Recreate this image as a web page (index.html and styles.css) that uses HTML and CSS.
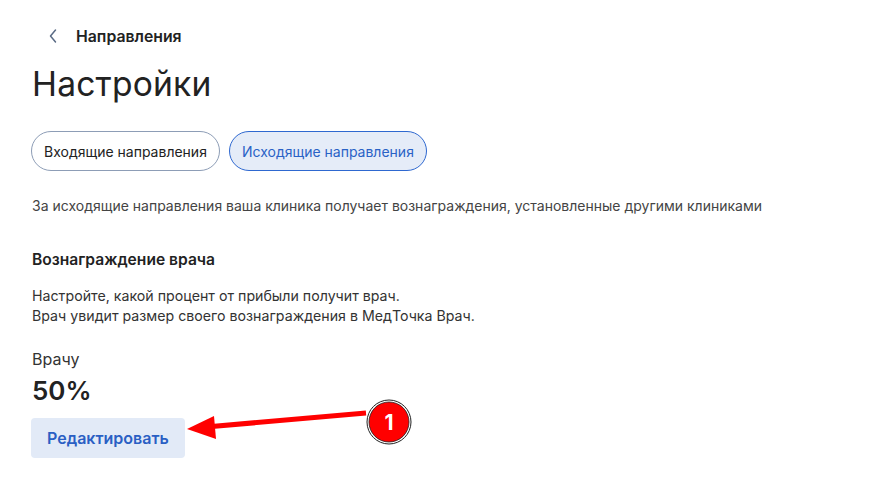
FILE: index.html
```html
<!DOCTYPE html>
<html lang="ru">
<head>
<meta charset="utf-8">
<link rel="stylesheet" href="styles.css">
</head>
<body>
<div class="page">
  <div class="back">
    <svg class="chev" width="10" height="16" viewBox="0 0 10 16"><path d="M7.5 2 L2.5 8 L7.5 14" fill="none" stroke="#5a6b85" stroke-width="1.5" stroke-linecap="round" stroke-linejoin="round"/></svg>
    <span>Направления</span>
  </div>
  <h1 class="title">Настройки</h1>
  <div class="tabs">
    <div class="tab">Входящие направления</div>
    <div class="tab active">Исходящие направления</div>
  </div>
  <p class="desc">За исходящие направления ваша клиника получает вознаграждения, установленные другими клиниками</p>
  <h2 class="sub">Вознаграждение врача</h2>
  <p class="text">Настройте, какой процент от прибыли получит врач.<br>Врач увидит размер своего вознаграждения в МедТочка Врач.</p>
  <div class="label">Врачу</div>
  <div class="value">50%</div>
  <div class="btnrow">
    <button class="btn">Редактировать</button>
  </div>
  <svg class="annot" width="882" height="482" viewBox="0 0 882 482">
    <line x1="366" y1="413" x2="206" y2="427" stroke="#ff0000" stroke-width="5"/>
    <polygon points="187,429 214,416 216,439" fill="#ff0000"/>
    <circle cx="389" cy="422" r="22" fill="#fff" stroke="#222" stroke-width="1"/>
    <circle cx="389" cy="422" r="20" fill="#ff0000" stroke="#222" stroke-width="0.8"/>
    <text x="389" y="430" text-anchor="middle" class="num">1</text>
  </svg>
</div>
</body>
</html>
```
FILE: styles.css
```css
* { box-sizing: border-box; }
html, body { margin: 0; padding: 0; background: #fff; }
body { font-family: Inter, "Noto Sans", sans-serif; color: #222; }
.page { position: relative; width: 882px; height: 482px; padding: 0 32px; overflow: hidden; }
.back { display: flex; align-items: center; height: 20px; margin-top: 26px; padding-left: 16px; gap: 18px; font-size: 15.8px; font-weight: 600; color: #222; }
.chev { display: block; }
.title { margin: 18px 0 0; font-size: 33.6px; font-weight: 400; line-height: 40px; color: #222; letter-spacing: 0.2px; }
.tabs { display: flex; gap: 9px; margin-top: 27px; margin-left: -1px; }
.tab { height: 40px; border: 1px solid #8d9db6; border-radius: 20px; padding: 0 12px; display: flex; align-items: center; font-size: 14px; color: #222; }
.tab.active { border-color: #2e68d0; background: #e5ecf8; color: #2a62c6; }
.desc { margin: 25px 0 0; font-size: 14px; color: #444; line-height: 20px; }
.sub { margin: 34px 0 0; font-size: 15.6px; font-weight: 600; line-height: 20px; color: #222; }
.text { margin: 16px 0 0; font-size: 14.2px; line-height: 20px; color: #333; }
.label { margin-top: 23px; font-size: 16px; line-height: 20px; color: #333; }
.value { margin-top: 6px; font-size: 26px; font-weight: 600; line-height: 32px; color: #222; }
.btnrow { display: flex; margin-top: 11px; margin-left: -1px; }
.btn { height: 40px; padding: 0 16px; border: none; border-radius: 4px; background: #e2eaf7; color: #2a5fc4; font-family: Inter, "Noto Sans", sans-serif; font-size: 16px; font-weight: 600; }
.annot { position: absolute; left: 0; top: 0; pointer-events: none; }
.num { font-family: Inter, sans-serif; font-size: 21px; font-weight: 700; fill: #fff; }
```
